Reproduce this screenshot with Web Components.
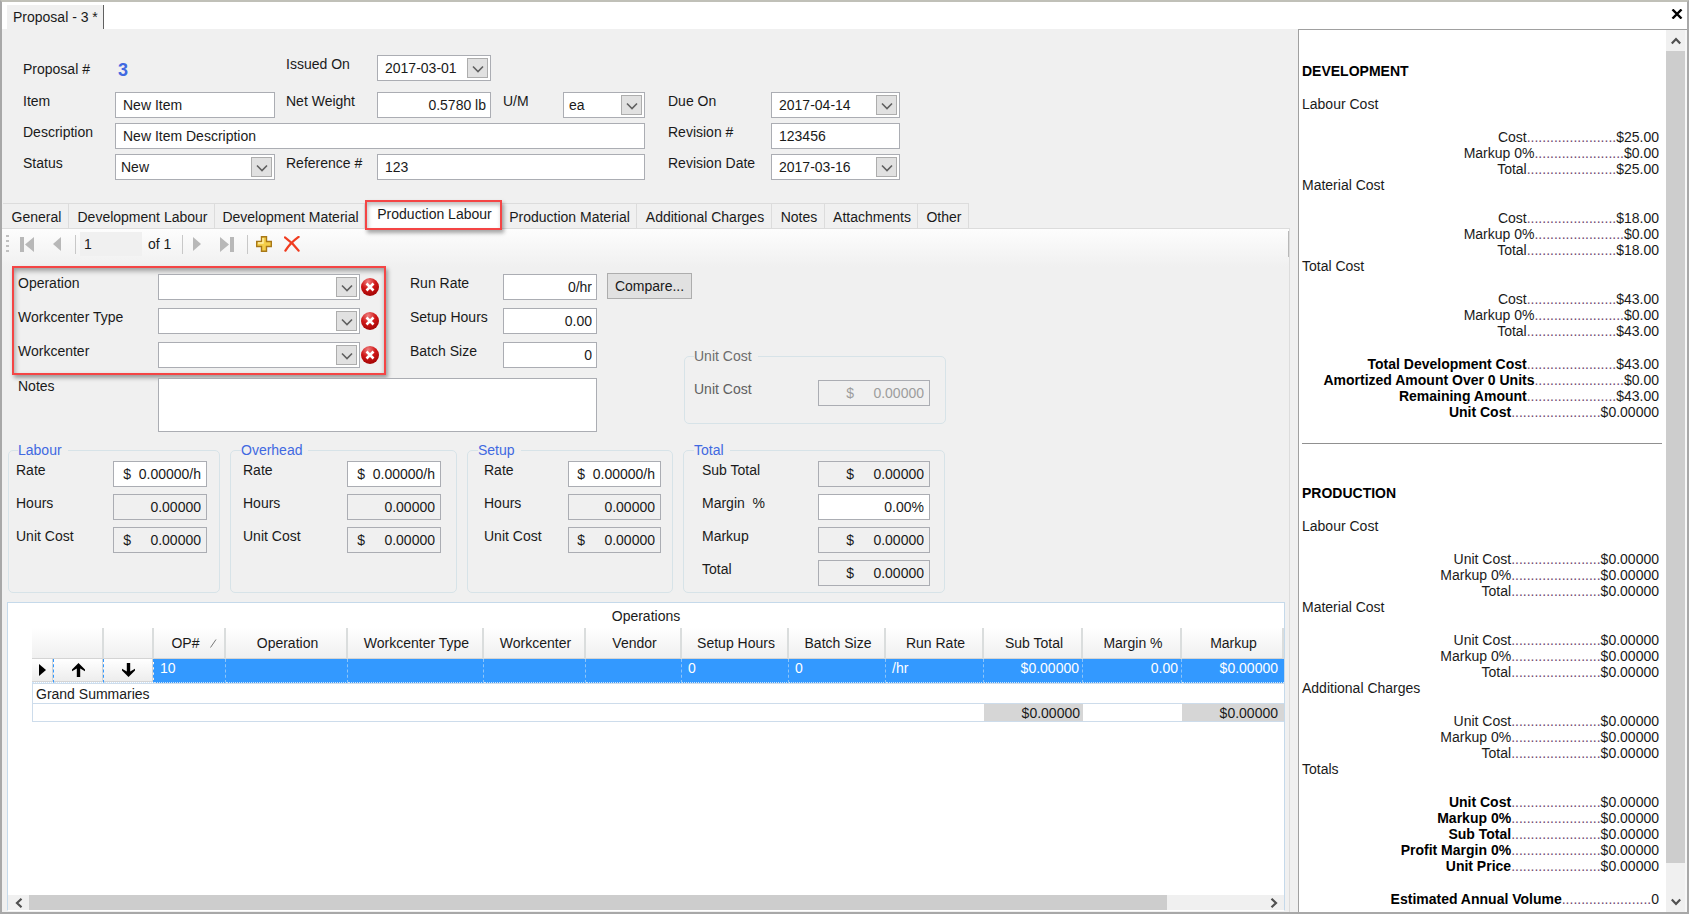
<!DOCTYPE html>
<html lang="en">
<head>
<meta charset="utf-8">
<title>Proposal - 3</title>
<style>
html, body { margin: 0; height: 100%; }
body { font: 14px/16px "Liberation Sans", Arial, sans-serif; color: #1a1a1a; background: #f0f0f0; }
</style>
</head>
<body>
<proposal-window></proposal-window>
<script>
const BASE = `
:host, *, *::before, *::after { box-sizing: border-box; }
:host([hidden]) { display: none; }
input, select, textarea, button { font: inherit; color: inherit; margin: 0; border-radius: 0; outline: none; }
`;

function define(name, css, markup) {
  customElements.define(name, class extends HTMLElement {
    constructor() {
      super();
      this.attachShadow({ mode: "open" });
    }
    connectedCallback() {
      if (this.shadowRoot.childNodes.length) return;
      const t = document.createElement("template");
      t.innerHTML = `<style>${BASE}${css}</style>` + (typeof markup === "function" ? markup(this) : markup);
      this.shadowRoot.append(t.content.cloneNode(true));
    }
  });
}

const CHEVRON = `<svg width="12" height="8" viewBox="0 0 12 8" aria-hidden="true"><path d="M1 1.5 6 6.5 11 1.5" fill="none" stroke="#606060" stroke-width="1.6"/></svg>`;

/* Label with a text box, drop-down, date picker or static value */
define("form-field", `
:host { display: flex; align-items: flex-start; min-width: 0; }
label, .label { flex: none; width: var(--label, 90px); padding-top: 1px; white-space: pre; }
.box { flex: 1; min-width: 0; height: 26px; display: grid; grid-template-columns: minmax(0, 1fr) 24px; border: 1px solid #abadb3; background: #fff; }
.box.plain { grid-template-columns: minmax(0, 1fr); }
input { width: 100%; height: 100%; border: 0; padding: 0 5px 0 7px; background: transparent; }
input.num { text-align: right; padding: 0 var(--pad-end, 4px) 0 2px; }
select { grid-area: 1 / 1 / 2 / 3; width: 100%; height: 100%; appearance: none; border: 0; background: transparent; padding: 0 26px 0 5px; }
.drop { grid-area: 1 / 2; width: 21px; height: 20px; margin: 2px 0 0 1px; padding: 2px 0 0; display: grid; place-items: center; border: 1px solid #adadad; background: #e1e1e1; pointer-events: none; }
:host([readonly]) .box, :host([disabled]) .box { background: #f0f0f0; }
:host([disabled]) input { color: #9d9d9d; }
:host([disabled]) label { color: #606060; }
.static { color: #4169e1; font-weight: bold; font-size: 18px; line-height: 20px; }
:host([kind="static"]) { padding-top: 5px; }
.static { padding: 0 0 0 3px; }
.error { flex: none; margin: 4px 0 0 1px; }
`, el => {
  const kind = el.getAttribute("kind") || "text";
  const value = el.getAttribute("value") || "";
  const label = el.getAttribute("label");
  if (kind === "static") return `<span class="label">${label}</span><output class="static">${value}</output>`;
  const text = `<input id="c" type="text" value="${value}" class="${kind === "num" ? "num" : ""}" ${el.hasAttribute("readonly") ? "readonly" : ""} ${el.hasAttribute("disabled") ? "disabled" : ""}>`;
  const box = kind === "select"
    ? `<div class="box"><select id="c"><option>${value}</option></select><span class="drop">${CHEVRON}</span></div>`
    : kind === "date"
    ? `<div class="box">${text}<button class="drop" type="button" aria-label="Open calendar">${CHEVRON}</button></div>`
    : `<div class="box plain">${text}</div>`;
  const error = el.hasAttribute("error") ? `
    <svg class="error" width="18" height="18" viewBox="0 0 18 18" role="img" aria-label="Required">
      <defs><radialGradient id="g" cx=".4" cy=".2" r=".9"><stop offset="0" stop-color="#f08080"/><stop offset=".45" stop-color="#d01818"/><stop offset="1" stop-color="#900"/></radialGradient></defs>
      <circle cx="9" cy="9" r="9" fill="url(#g)"/><path d="m5.5 5.5 7 7m0-7-7 7" stroke="#fff" stroke-width="2.6"/>
    </svg>` : "";
  return `<label for="c">${label}</label>${box}${error}`;
});

/* Titled frame */
define("group-box", `
:host { display: block; color: inherit; }
fieldset { height: 100%; min-width: 0; margin: 0; border: 1px solid #d7e3e8; border-radius: 5px; padding: 3px var(--end, 13px) 0 var(--start, 7px); display: block; }
legend { margin-left: var(--legend, 2px); padding: 0 6px 0 0; line-height: 16px; color: var(--legend-color, #4169e1); }
.rows { display: grid; gap: 7px; }
`, el => `<fieldset><legend>${el.getAttribute("legend")}</legend><div class="rows"><slot></slot></div></fieldset>`);

/* Window caption with the document tab */
define("document-tabs", `
:host { display: flex; justify-content: space-between; height: 27px; background: #fff; padding-left: 5px; }
.tab { border: 0; border-right: 1px solid #606060; background: #f0f0f0; padding: 0 6px; margin-top: 3px; width: 97px; text-align: left; white-space: nowrap; }
.close { border: 0; background: none; width: 20px; padding: 0 1px 3px 0; display: grid; place-items: center; }
`, `<button class="tab" type="button">Proposal - 3 *</button>
<button class="close" type="button" aria-label="Close"><svg width="12" height="10" viewBox="0 0 12 10"><path d="M1.5.5l9 9m0-9-9 9" stroke="#000" stroke-width="2.4"/></svg></button>`);

define("proposal-header", `
:host { display: grid; grid-template-columns: 252px 11px 205px 12px 142px 23px 232px; grid-template-rows: 37px 31px 31px 31px; padding: 26px 0 18px 21px; --label: 92px; }
.b { grid-column: 3; --label: 91px; }
.c { grid-column: 5; --label: 60px; }
.d { grid-column: 7; --label: 103px; }
.item { grid-row: 2; }
.wide { grid-column: 1 / 6; }
.ref { grid-column: 3 / 6; --label: 91px; }
`, `
<form-field kind="static" label="Proposal #" value="3"></form-field>
<form-field class="b" kind="date" label="Issued On" value="2017-03-01"></form-field>
<form-field class="item" label="Item" value="New Item"></form-field>
<form-field class="b" kind="num" label="Net Weight" value="0.5780 lb"></form-field>
<form-field class="c" kind="select" label="U/M" value="ea"></form-field>
<form-field class="d" kind="date" label="Due On" value="2017-04-14"></form-field>
<form-field class="wide" label="Description" value="New Item Description"></form-field>
<form-field class="d" label="Revision #" value="123456"></form-field>
<form-field kind="select" label="Status" value="New"></form-field>
<form-field class="ref" label="Reference #" value="123"></form-field>
<form-field class="d" kind="date" label="Revision Date" value="2017-03-16"></form-field>`);

const TABS = ["General", "Development Labour", "Development Material", "Production Labour", "Production Material", "Additional Charges", "Notes", "Attachments", "Other"];
define("section-tabs", `
:host { display: block; padding-left: 1px; border-bottom: 1px solid #dcdcdc; }
nav { display: grid; grid-template-columns: 66px 146px 150px 136px 136px 135px 53px 93px 51px; height: 25px; }
button { border: 1px solid #dcdcdc; border-width: 1px 1px 0 0; background: #f0f0f0; padding: 1px 0 0 2px; text-align: center; white-space: nowrap; }
button.on { margin: -3px -1px -2px 0; z-index: 1; padding: 0 0 3px 2px; border: 2px solid #f44545; background: #fff; box-shadow: 2px 3px 4px rgba(0,0,0,.35), inset 1px 3px 4px rgba(0,0,0,.25); }
`, `<nav role="tablist">${TABS.map((t, i) => `<button type="button" role="tab" class="${i === 3 ? "on" : ""}">${t}</button>`).join("")}</nav>`);

define("record-navigator", `
:host { display: flex; align-items: center; height: 38px; padding: 0 0 8px 4px; background: linear-gradient(#fdfdfd, #f0f0f0); }
button { border: 0; padding: 0; background: none; display: grid; place-items: center; width: 32px; height: 24px; }
.sep { width: 1px; height: 19px; background: #c8c8c8; }
input { width: 62px; height: 24px; margin-left: 4px; border: 0; background: #f0f0f0; padding: 0 4px; }
.of { width: 40px; padding-left: 6px; white-space: nowrap; }
.grip { width: 3px; height: 19px; background: repeating-linear-gradient(#c0c0c0 0 2px, transparent 2px 5px); }
.first { margin-left: 2px; }
.prev { width: 28px; margin-right: 4px; }
.next { width: 28px; }
.last { margin-right: 4px; }
.del { width: 24px; }
.end { margin-left: auto; width: 1px; height: 26px; background: #b8b8b8; }
`, `<span class="grip"></span>
<button class="first" type="button" aria-label="Move first"><svg width="14" height="15" viewBox="0 0 14 15"><path d="M0 0h4v15H0zM14 0v15L5 7.500z" fill="#b8b8b8"/></svg></button>
<button class="prev" type="button" aria-label="Move previous"><svg width="8" height="14" viewBox="0 0 8 14"><path d="M8 0v14L0 7z" fill="#b8b8b8"/></svg></button>
<span class="sep"></span>
<input type="text" value="1" aria-label="Record"><span class="of">of 1</span>
<span class="sep"></span>
<button class="next" type="button" aria-label="Move next"><svg width="8" height="14" viewBox="0 0 8 14"><path d="M0 0v14l8-7z" fill="#b8b8b8"/></svg></button>
<button class="last" type="button" aria-label="Move last"><svg width="14" height="15" viewBox="0 0 14 15"><path d="M10 0h4v15h-4zM0 0v15l9-7.500z" fill="#b8b8b8"/></svg></button>
<span class="sep"></span>
<button class="add" type="button" aria-label="Add"><svg width="16" height="16" viewBox="0 0 16 16"><path d="M5.500.7h5v4.800h4.800v5h-4.800v4.800h-5v-4.800H.7v-5h4.800z" fill="#f5cf4a" stroke="#a87818" stroke-width="1.4"/><path d="M7 2v5H2" fill="none" stroke="#fff0a8" stroke-width="1.400"/></svg></button>
<button class="del" type="button" aria-label="Delete"><svg width="16" height="16" viewBox="0 0 17 17"><path d="M1 1.500C6 5 12 11 15.500 15.500M15.500 1C10 5 5 10 1.500 15.500" fill="none" stroke="#f03c20" stroke-width="2.400" stroke-linecap="round"/></svg></button>
<span class="end"></span>`);

define("operation-form", `
:host { display: grid; grid-template-columns: 585px 340px; column-gap: 10px; padding: 0 0 0 10px; margin-top: -1px; }
.pair { display: flex; justify-content: space-between; }
.required { width: 374px; display: grid; gap: 8px; padding: 6px 4px 5px; border: 2px solid #f44545; --label: 140px; box-shadow: 2px 3px 4px rgba(0,0,0,.35), inset 1px 3px 5px rgba(0,0,0,.35); }
.required form-field { width: 361px; }
.rates { width: 187px; display: grid; gap: 8px; align-content: start; padding-top: 8px; --label: 93px; }
.notes { display: flex; padding: 3px 0 0 6px; }
.notes label { width: 140px; flex: none; }
textarea { flex: 1; height: 54px; border: 1px solid #abadb3; background: #fff; resize: none; }
.side { padding-top: 7px; display: flex; flex-direction: column; }
.compare { width: 85px; height: 26px; border: 1px solid #adadad; background: #e1e1e1; padding: 0; }
group-box { width: 262px; height: 76px; margin: 49px 0 0 77px; --legend-color: #6d6d6d; --start: 9px; --end: 15px; --legend: 0px; --label: 124px; --pad-end: 5px; }
group-box form-field { margin-top: 13px; }
`, `<div>
  <div class="pair">
    <div class="required">
      <form-field kind="select" label="Operation" error></form-field>
      <form-field kind="select" label="Workcenter Type" error></form-field>
      <form-field kind="select" label="Workcenter" error></form-field>
    </div>
    <div class="rates">
      <form-field kind="num" label="Run Rate" value="0/hr"></form-field>
      <form-field kind="num" label="Setup Hours" value="0.00"></form-field>
      <form-field kind="num" label="Batch Size" value="0"></form-field>
    </div>
  </div>
  <div class="notes"><label for="n">Notes</label><textarea id="n"></textarea></div>
</div>
<div class="side">
  <button class="compare" type="button">Compare...</button>
  <group-box legend="Unit Cost"><form-field kind="num" disabled label="Unit Cost" value="$     0.00000"></form-field></group-box>
</div>`);

const costs = `<form-field kind="num" label="Rate" value="$  0.00000/h"></form-field>
<form-field kind="num" readonly label="Hours" value="0.00000"></form-field>
<form-field kind="num" readonly label="Unit Cost" value="$     0.00000"></form-field>`;
define("cost-groups", `
:host { display: grid; grid-template-columns: 212px 227px 206px 262px; column-gap: 10px; height: 151px; margin: 10px 0 9px 6px; --pad-end: 5px; --end: 12px; }
.labour { --label: 97px; }
.overhead { --start: 12px; --legend: -2px; --label: 104px; --end: 15px; }
.setup { --start: 16px; --legend: -6px; --label: 84px; --end: 11px; }
.total { --start: 18px; --legend: -8px; --label: 116px; --end: 14px; }
`, `<group-box class="labour" legend="Labour">${costs}</group-box>
<group-box class="overhead" legend="Overhead">${costs}</group-box>
<group-box class="setup" legend="Setup">${costs}</group-box>
<group-box class="total" legend="Total">
  <form-field kind="num" readonly label="Sub Total" value="$     0.00000"></form-field>
  <form-field kind="num" label="Margin  %" value="0.00%"></form-field>
  <form-field kind="num" readonly label="Markup" value="$     0.00000"></form-field>
  <form-field kind="num" readonly label="Total" value="$     0.00000"></form-field>
</group-box>`);

const COLS = [["Operation", ""], ["Workcenter Type", ""], ["Workcenter", ""], ["Vendor", ""], ["Setup Hours", "0"], ["Batch Size", "0"], ["Run Rate", "/hr"], ["Sub Total", "$0.00000", 1], ["Margin %", "0.00", 1], ["Markup", "$0.00000", 1]];
const WIDTHS = [22, 50, 50, 72, 122, 136, 102, 96, 107, 97, 98, 99, 99];
define("operations-grid", `
:host { display: flex; flex-direction: column; min-height: 0; flex: 1; margin: 0 4px 1px 5px; border: 1px solid #c5d9ea; border-bottom-color: #fff; background: #fff; }
.body { flex: 1; min-height: 0; overflow: hidden; padding-left: 24px; }
h2 { font: inherit; margin: 0; padding: 5px 24px 0 0; height: 25px; text-align: center; }
table { width: 100%; table-layout: fixed; border-collapse: separate; border-spacing: 0; }
th { height: 31px; padding: 0 0 0 3px; font-weight: normal; background: linear-gradient(#fff, #f0f0f0); border-right: 2px solid #dadddd; border-bottom: 1px solid #d4d4d4; white-space: nowrap; }
th svg { margin-left: 10px; }
th.sort { padding-left: 10px; }
.row td { height: 24px; padding: 1px 2px 0 6px; vertical-align: top; background: #3399ff; color: #fff; border-right: 1px dashed #8cc4f8; border-bottom: 1px dotted #cfe5fb; white-space: nowrap; }
.row td.tool { background: linear-gradient(#fff, #ececec); padding: 0; border-right: 1px dashed #3399ff; }
.row button { display: grid; place-items: center; width: 100%; height: 23px; border: 1px solid #d4d4d4; border-width: 0 1px 1px 0; background: none; padding: 0; }
td.n.n { text-align: right; padding: 1px 3px 0 0; }
td.n:last-child.n { padding-right: 6px; border-right: 0; }
.title td { height: 21px; padding: 1px 3px 0; border: 1px solid #cddceb; border-right: 0; }
.sum td { height: 18px; padding: 0; border-bottom: 1px solid #cddceb; }
.sum td.n.n { padding-top: 0; }
.sum td:first-child { border-left: 1px solid #cddceb; }
.sum td.v { background: #d6d6d6; }
.scroll { flex: none; display: grid; grid-template-columns: 21px 1139fr 96fr 21px; height: 15px; background: #f0f0f0; place-items: center; }
.thumb { background: #cdcdcd; width: 100%; height: 100%; }
.scroll svg:last-child { grid-column: 4; }
`, `<div class="body"><h2>Operations</h2>
<table><colgroup>${WIDTHS.map(w => `<col style="width:${w}px">`).join("")}<col></colgroup>
<thead><tr><th colspan="2"></th><th></th><th class="sort">OP#<svg width="7" height="9" viewBox="0 0 7 9"><path d="M.5 8.500 6 .5" stroke="#777" fill="none"/></svg></th>${COLS.map(c => `<th>${c[0]}</th>`).join("")}</tr></thead>
<tbody><tr class="row">
<td class="tool"><button type="button" aria-label="Current row"><svg width="7" height="12" viewBox="0 0 7 12"><path d="M0 0v12l7-6z"/></svg></button></td>
<td class="tool"><button type="button" aria-label="Move up"><svg width="13" height="14" viewBox="0 0 13 14"><path d="M6.500 0 13 6.500v1.700L8.200 5.500V14H4.800V5.500L0 8.200V6.500z"/></svg></button></td>
<td class="tool"><button type="button" aria-label="Move down"><svg width="13" height="14" viewBox="0 0 13 14"><path d="M6.500 14 13 7.500V5.800L8.200 8.500V0H4.800v8.500L0 5.800v1.700z"/></svg></button></td>
<td>10</td>${COLS.map(c => `<td class="${c[2] ? "n" : ""}">${c[1]}</td>`).join("")}</tr></tbody>
<tfoot><tr class="title"><td colspan="14">Grand Summaries</td></tr>
<tr class="sum"><td colspan="11"></td><td class="n v">$0.00000</td><td></td><td class="n v">$0.00000</td></tr></tfoot></table></div>
<div class="scroll"><svg width="8" height="10" viewBox="0 0 8 10"><path d="M6.500.8 2 5l4.500 4.200" fill="none" stroke="#505050" stroke-width="2.200"/></svg><span class="thumb"></span><svg width="8" height="10" viewBox="0 0 8 10"><path d="M1.500.8 6 5 1.500 9.200" fill="none" stroke="#505050" stroke-width="2.200"/></svg></div>`);

const DOTS = ".".repeat(23);
const line = ([k, v], b) => `<div class="line">${b ? `<b>${k}</b>` : k}<i>${DOTS}</i>${v}</div>`;
const block = (t, rows) => `<h3>${t}</h3><div class="lines">${rows.map(r => line(r)).join("")}</div>`;
const dev = v => [["Cost", v], ["Markup 0%", "$0.00"], ["Total", v]];
const Z = "$0.00000";
const prod = [["Unit Cost", Z], ["Markup 0%", Z], ["Total", Z]];
define("cost-summary", `
:host { display: grid; grid-template-columns: minmax(0, 1fr) 21px; grid-template-rows: minmax(0, 1fr); min-height: 0; border: 1px solid #a0a0a0; border-width: 1px 0 0 1px; background: #fff; }
.text { min-height: 0; overflow: hidden; padding: 33px 4px 0 3px; }
h2 { font: bold 14px/16px "Liberation Sans", Arial, sans-serif; margin: 0 0 17px; color: #000; }
h3 { font: inherit; margin: 0 0 17px; }
.line { text-align: right; padding-right: 3px; white-space: nowrap; }
i { font-style: normal; color: #704870; }
b { color: #000; }
.gap { margin-top: 17px; }
hr { border: 0; height: 1px; margin: 23px 0 41px; background: #909090; }
.scroll { min-height: 0; display: grid; grid-template-rows: 21px 29fr 1fr 21px; background: #f0f0f0; place-items: center; border-right: 2px solid #f7f7f7; }
.thumb { width: 100%; height: 100%; background: #cdcdcd; }
.scroll svg:last-child { grid-row: 4; }
`, `<div class="text"><h2>DEVELOPMENT</h2>
${block("Labour Cost", dev("$25.00"))}${block("Material Cost", dev("$18.00"))}${block("Total Cost", dev("$43.00"))}
<div class="gap">${[["Total Development Cost", "$43.00"], ["Amortized Amount Over 0 Units", "$0.00"], ["Remaining Amount", "$43.00"], ["Unit Cost", Z]].map(r => line(r, 1)).join("")}</div>
<hr><h2>PRODUCTION</h2>
${block("Labour Cost", prod)}${block("Material Cost", prod)}${block("Additional Charges", prod)}
<h3>Totals</h3>${[["Unit Cost", Z], ["Markup 0%", Z], ["Sub Total", Z], ["Profit Margin 0%", Z], ["Unit Price", Z]].map(r => line(r, 1)).join("")}
<div class="gap">${line(["Estimated Annual Volume", "0"], 1)}</div></div>
<div class="scroll"><svg width="10" height="8" viewBox="0 0 10 8"><path d="M.8 6.500 5 2l4.200 4.500" fill="none" stroke="#505050" stroke-width="2.200"/></svg><span class="thumb"></span><svg width="10" height="8" viewBox="0 0 10 8"><path d="M.8 1.500 5 6l4.200-4.500" fill="none" stroke="#505050" stroke-width="2.200"/></svg></div>`);

define("proposal-window", `
:host { display: flex; flex-direction: column; height: 100vh; min-height: 900px; border: 2px solid #a8a8a8; border-top-color: #c0c0b8; overflow: hidden; }
main { flex: 1; min-height: 0; display: grid; grid-template-columns: minmax(0, 1fr) 389px; grid-template-rows: minmax(0, 1fr); column-gap: 8px; background: #f0f0f0; }
.work { display: flex; flex-direction: column; min-height: 0; }
.page { flex: 1; min-height: 0; display: flex; flex-direction: column; border-right: 1px solid #dcdcdc; }
`, `<document-tabs></document-tabs>
<main>
  <div class="work">
    <proposal-header></proposal-header>
    <section-tabs></section-tabs>
    <div class="page">
      <record-navigator></record-navigator>
      <operation-form></operation-form>
      <cost-groups></cost-groups>
      <operations-grid></operations-grid>
    </div>
  </div>
  <cost-summary></cost-summary>
</main>`);
</script>
</body>
</html>
